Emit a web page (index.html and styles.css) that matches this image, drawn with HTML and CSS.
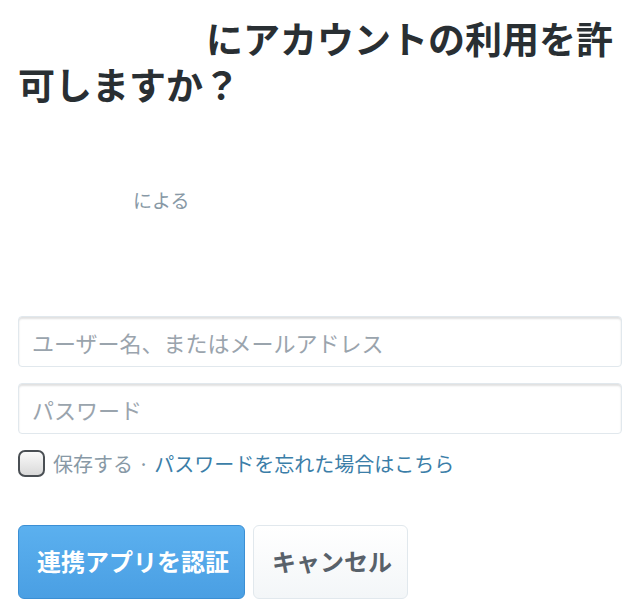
FILE: index.html
```html
<!DOCTYPE html>
<html lang="ja">
<head>
<meta charset="utf-8">
<link rel="stylesheet" href="styles.css">
</head>
<body>
<div class="page">
  <h1 class="title"><span class="app-name"></span>にアカウントの利用を許可しますか？</h1>
  <div class="app-info">
    <p class="by"><span class="author"></span>による</p>
  </div>
  <form class="form">
    <div class="field"><input class="input" type="text" placeholder="ユーザー名、またはメールアドレス"></div>
    <div class="field"><input class="input" type="password" placeholder="パスワード"></div>
    <div class="remember">
      <span class="checkbox"></span>
      <span class="remember-label">保存する</span>
      <span class="dot">·</span>
      <a class="forgot" href="#">パスワードを忘れた場合はこちら</a>
    </div>
    <div class="buttons">
      <button type="button" class="btn btn-primary">連携アプリを認証</button>
      <button type="button" class="btn btn-cancel">キャンセル</button>
    </div>
  </form>
</div>
</body>
</html>
```

FILE: styles.css
```css
* { box-sizing: border-box; }
html, body { margin: 0; padding: 0; background: #fff; }
body {
  font-family: "Noto Sans CJK JP", "Noto Sans", sans-serif;
  color: #292f33;
}
.page { padding: 15px 18px 0 18px; }
.title {
  margin: 0;
  font-size: 37px;
  line-height: 46px;
  font-weight: 700;
  color: #292f33;
}
.app-name { display: inline-block; width: 188px; }
.app-info { height: 209px; padding-top: 80px; }
.by {
  margin: 0;
  font-size: 19px;
  line-height: 26px;
  color: #8899a6;
}
.author { display: inline-block; width: 115px; }
.form { display: flex; flex-direction: column; }
.field { margin-bottom: 16px; }
.input {
  display: block;
  width: 100%;
  height: 51px;
  border: 1px solid #e1e8ed;
  border-radius: 4px;
  box-shadow: inset 0 2px 2px rgba(0,0,0,0.12);
  padding: 0 13px;
  font-family: inherit;
  font-size: 22px;
  color: #292f33;
  outline: none;
}
.input::placeholder { color: #9aa4ad; }
.remember {
  display: flex;
  align-items: center;
  gap: 6px;
  font-size: 20px;
  line-height: 27px;
  height: 27px;
}
.checkbox {
  width: 27px;
  height: 27px;
  border: 2px solid #4a4f54;
  border-radius: 7px;
  background: linear-gradient(#fafafa, #d9d9d9);
  margin-right: 2px;
}
.remember-label { color: #8899a6; }
.dot { color: #8899a6; margin: 0 -1px; }
.forgot { color: #3b7ea8; text-decoration: none; }
.buttons {
  display: flex;
  gap: 8px;
  margin-top: 48px;
}
.btn {
  height: 74px;
  border-radius: 6px;
  font-family: inherit;
  font-size: 24px;
  line-height: 30px;
  font-weight: 700;
  white-space: nowrap;
  cursor: pointer;
  padding-bottom: 4px;
}
.btn-primary {
  padding-left: 18px;
  padding-right: 18px;
  width: 227px;
  color: #fff;
  background: linear-gradient(#5bb0ef, #4a9fe3);
  border: 1px solid #3b8fd4;
}
.btn-cancel {
  padding-left: 18px;
  padding-right: 18px;
  width: 155px;
  color: #58616a;
  background: linear-gradient(#ffffff, #f3f6f8);
  border: 1px solid #e1e8ed;
}
```
